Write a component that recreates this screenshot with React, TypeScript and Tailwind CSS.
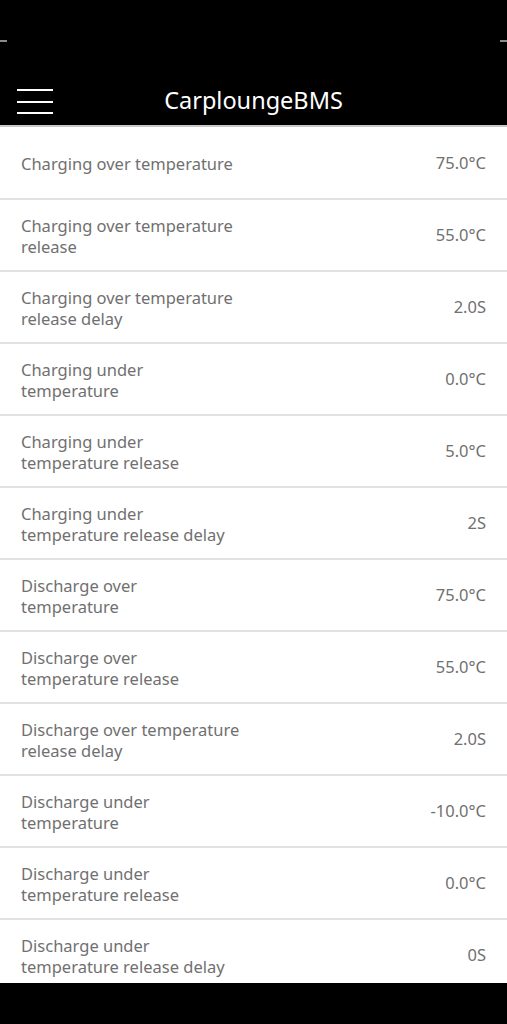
import React from 'react';

const rows: { label: string[]; value: string }[] = [
  { label: ['Charging over temperature'], value: '75.0°C' },
  { label: ['Charging over temperature', 'release'], value: '55.0°C' },
  { label: ['Charging over temperature', 'release delay'], value: '2.0S' },
  { label: ['Charging under', 'temperature'], value: '0.0°C' },
  { label: ['Charging under', 'temperature release'], value: '5.0°C' },
  { label: ['Charging under', 'temperature release delay'], value: '2S' },
  { label: ['Discharge over', 'temperature'], value: '75.0°C' },
  { label: ['Discharge over', 'temperature release'], value: '55.0°C' },
  { label: ['Discharge over temperature', 'release delay'], value: '2.0S' },
  { label: ['Discharge under', 'temperature'], value: '-10.0°C' },
  { label: ['Discharge under', 'temperature release'], value: '0.0°C' },
  { label: ['Discharge under', 'temperature release delay'], value: '0S' },
];

export default function App() {
  return (
    <div className="w-[507px] h-[1024px] bg-black flex flex-col overflow-hidden font-['Noto_Sans',sans-serif]">
      {/* Header */}
      <header className="h-[125px] bg-black flex flex-col shrink-0">
        <div className="mt-[40px] flex justify-between">
          <div className="w-[7px] h-[2px] bg-[#8a8a8a]" />
          <div className="w-[7px] h-[2px] bg-[#8a8a8a]" />
        </div>
        <div className="mt-[44px] relative h-[30px] flex items-center justify-center">
          <div className="absolute left-[17px] top-[3px] w-[36px] flex flex-col gap-[9.5px]">
            <div className="h-[2px] bg-white" />
            <div className="h-[2px] bg-white" />
            <div className="h-[2px] bg-white" />
          </div>
          <h1 className="text-[23.5px] text-white">CarploungeBMS</h1>
        </div>
      </header>
      <div className="h-[2px] bg-[#c8c8c8] shrink-0" />

      {/* List */}
      <div className="flex-1 bg-white overflow-hidden">
        {rows.map((r, i) => (
          <div
            key={i}
            className={`${i === 0 ? 'h-[73px]' : 'h-[72px]'} border-b-2 border-[#e2e2e2] flex items-center justify-between pl-[21px] pr-[21px] pt-[1px]`}
          >
            <div className="text-[16.5px] leading-[21px] text-[#707070]">
              {r.label.map((l, j) => (
                <div key={j}>{l}</div>
              ))}
            </div>
            <div className="text-[16.5px] text-[#707070]">{r.value}</div>
          </div>
        ))}
      </div>

      {/* Bottom bar */}
      <div className="h-[41px] bg-black shrink-0" />
    </div>
  );
}
